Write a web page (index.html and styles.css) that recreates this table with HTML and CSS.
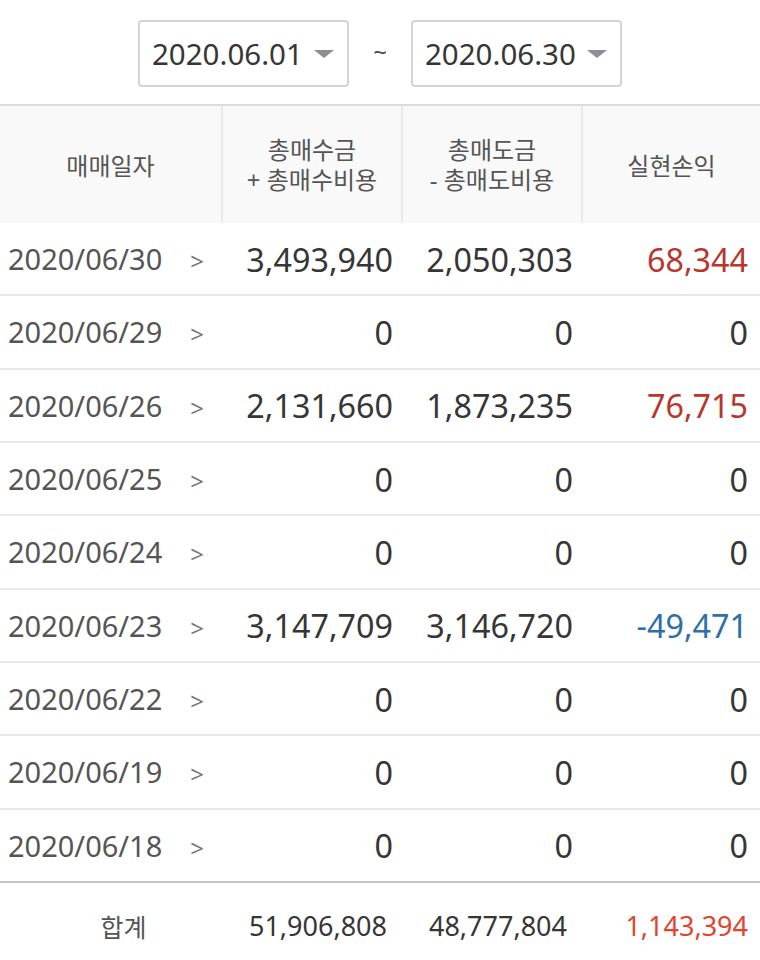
FILE: index.html
```html
<!DOCTYPE html>
<html>
  <head>
    <title>매매일지</title>
    <link rel="stylesheet" href="styles.css">
  </head>
  <body>

    <div class="filter">
      <div class="date_box">
        <span>2020.06.01</span>
        <span class="caret"></span>
      </div>
      <span class="tilde">~</span>
      <div class="date_box">
        <span>2020.06.30</span>
        <span class="caret"></span>
      </div>
    </div>

    <div class="table">
      <div class="head">
        <div class="hcell">매매일자</div>
        <div class="hcell"><span>총매수금</span><span>+ 총매수비용</span></div>
        <div class="hcell"><span>총매도금</span><span>- 총매도비용</span></div>
        <div class="hcell">실현손익</div>
      </div>

      <div class="row">
        <div class="date">2020/06/30<span class="chev">&gt;</span></div>
        <div class="num">3,493,940</div>
        <div class="num">2,050,303</div>
        <div class="num plus">68,344</div>
      </div>
      <div class="row">
        <div class="date">2020/06/29<span class="chev">&gt;</span></div>
        <div class="num">0</div>
        <div class="num">0</div>
        <div class="num">0</div>
      </div>
      <div class="row">
        <div class="date">2020/06/26<span class="chev">&gt;</span></div>
        <div class="num">2,131,660</div>
        <div class="num">1,873,235</div>
        <div class="num plus">76,715</div>
      </div>
      <div class="row">
        <div class="date">2020/06/25<span class="chev">&gt;</span></div>
        <div class="num">0</div>
        <div class="num">0</div>
        <div class="num">0</div>
      </div>
      <div class="row">
        <div class="date">2020/06/24<span class="chev">&gt;</span></div>
        <div class="num">0</div>
        <div class="num">0</div>
        <div class="num">0</div>
      </div>
      <div class="row">
        <div class="date">2020/06/23<span class="chev">&gt;</span></div>
        <div class="num">3,147,709</div>
        <div class="num">3,146,720</div>
        <div class="num minus">-49,471</div>
      </div>
      <div class="row">
        <div class="date">2020/06/22<span class="chev">&gt;</span></div>
        <div class="num">0</div>
        <div class="num">0</div>
        <div class="num">0</div>
      </div>
      <div class="row">
        <div class="date">2020/06/19<span class="chev">&gt;</span></div>
        <div class="num">0</div>
        <div class="num">0</div>
        <div class="num">0</div>
      </div>
      <div class="row last">
        <div class="date">2020/06/18<span class="chev">&gt;</span></div>
        <div class="num">0</div>
        <div class="num">0</div>
        <div class="num">0</div>
      </div>

      <div class="total">
        <div class="label">합계</div>
        <div class="num">51,906,808</div>
        <div class="num">48,777,804</div>
        <div class="num sum">1,143,394</div>
      </div>
    </div>

  </body>
</html>
```

FILE: styles.css
```css
* {
  padding: 0;
  margin: 0;
  box-sizing: border-box;
  font-family: "Noto Sans", "Noto Sans CJK KR", sans-serif;
}

body {
  width: 760px;
  background: #fff;
  color: #333;
}

.filter {
  height: 104px;
  display: flex;
  align-items: flex-start;
  justify-content: center;
  padding-top: 20px;
}
.date_box {
  width: 211px;
  height: 67px;
  border: 2px solid #d4d4d4;
  border-radius: 4px;
  display: flex;
  align-items: center;
  padding-left: 12px;
  font-size: 29.5px;
  color: #363636;
}
.caret {
  margin-left: 11px;
  width: 0;
  height: 0;
  border-left: 10px solid transparent;
  border-right: 10px solid transparent;
  border-top: 8px solid #8a8e97;
}
.tilde {
  width: 62px;
  text-align: center;
  font-size: 24px;
  color: #444;
  line-height: 64px;
}

.head {
  display: grid;
  grid-template-columns: 221px 180px 180px 179px;
  height: 119px;
  border-top: 2px solid #dcdcdc;
  background: #f9f9f9;
}
.hcell {
  display: flex;
  flex-direction: column;
  align-items: center;
  justify-content: center;
  text-align: center;
  font-family: "Noto Sans CJK KR", sans-serif;
  font-size: 24px;
  line-height: 30px;
  color: #555;
}
.hcell span {
  display: block;
}
.hcell + .hcell {
  border-left: 2px solid #e8e8e8;
}

.row,
.total {
  display: grid;
  grid-template-columns: 221px 180px 180px 179px;
  align-items: center;
}
.row {
  height: 73.33px;
  border-bottom: 2px solid #e8e8e8;
}
.row.last {
  border-bottom: 2px solid #c4c4c4;
}

.date {
  padding-left: 8px;
  font-size: 29px;
  color: #555;
}
.chev {
  margin-left: 28px;
  font-size: 24px;
  color: #777;
}
.num {
  text-align: right;
  padding-right: 8px;
  font-size: 32.3px;
  color: #363636;
}
.row .num:last-child {
  padding-right: 12px;
}
.plus {
  color: #b8362b !important;
}
.minus {
  color: #2f6fa6;
}

.total {
  height: 86px;
}
.total .label {
  text-align: center;
  padding-left: 26px;
  font-family: "Noto Sans CJK KR", sans-serif;
  font-size: 25px;
  color: #555;
}
.total .num {
  font-size: 27px;
  padding-right: 14px;
}
.total .sum {
  color: #e0462e;
  padding-right: 12px;
}
```
